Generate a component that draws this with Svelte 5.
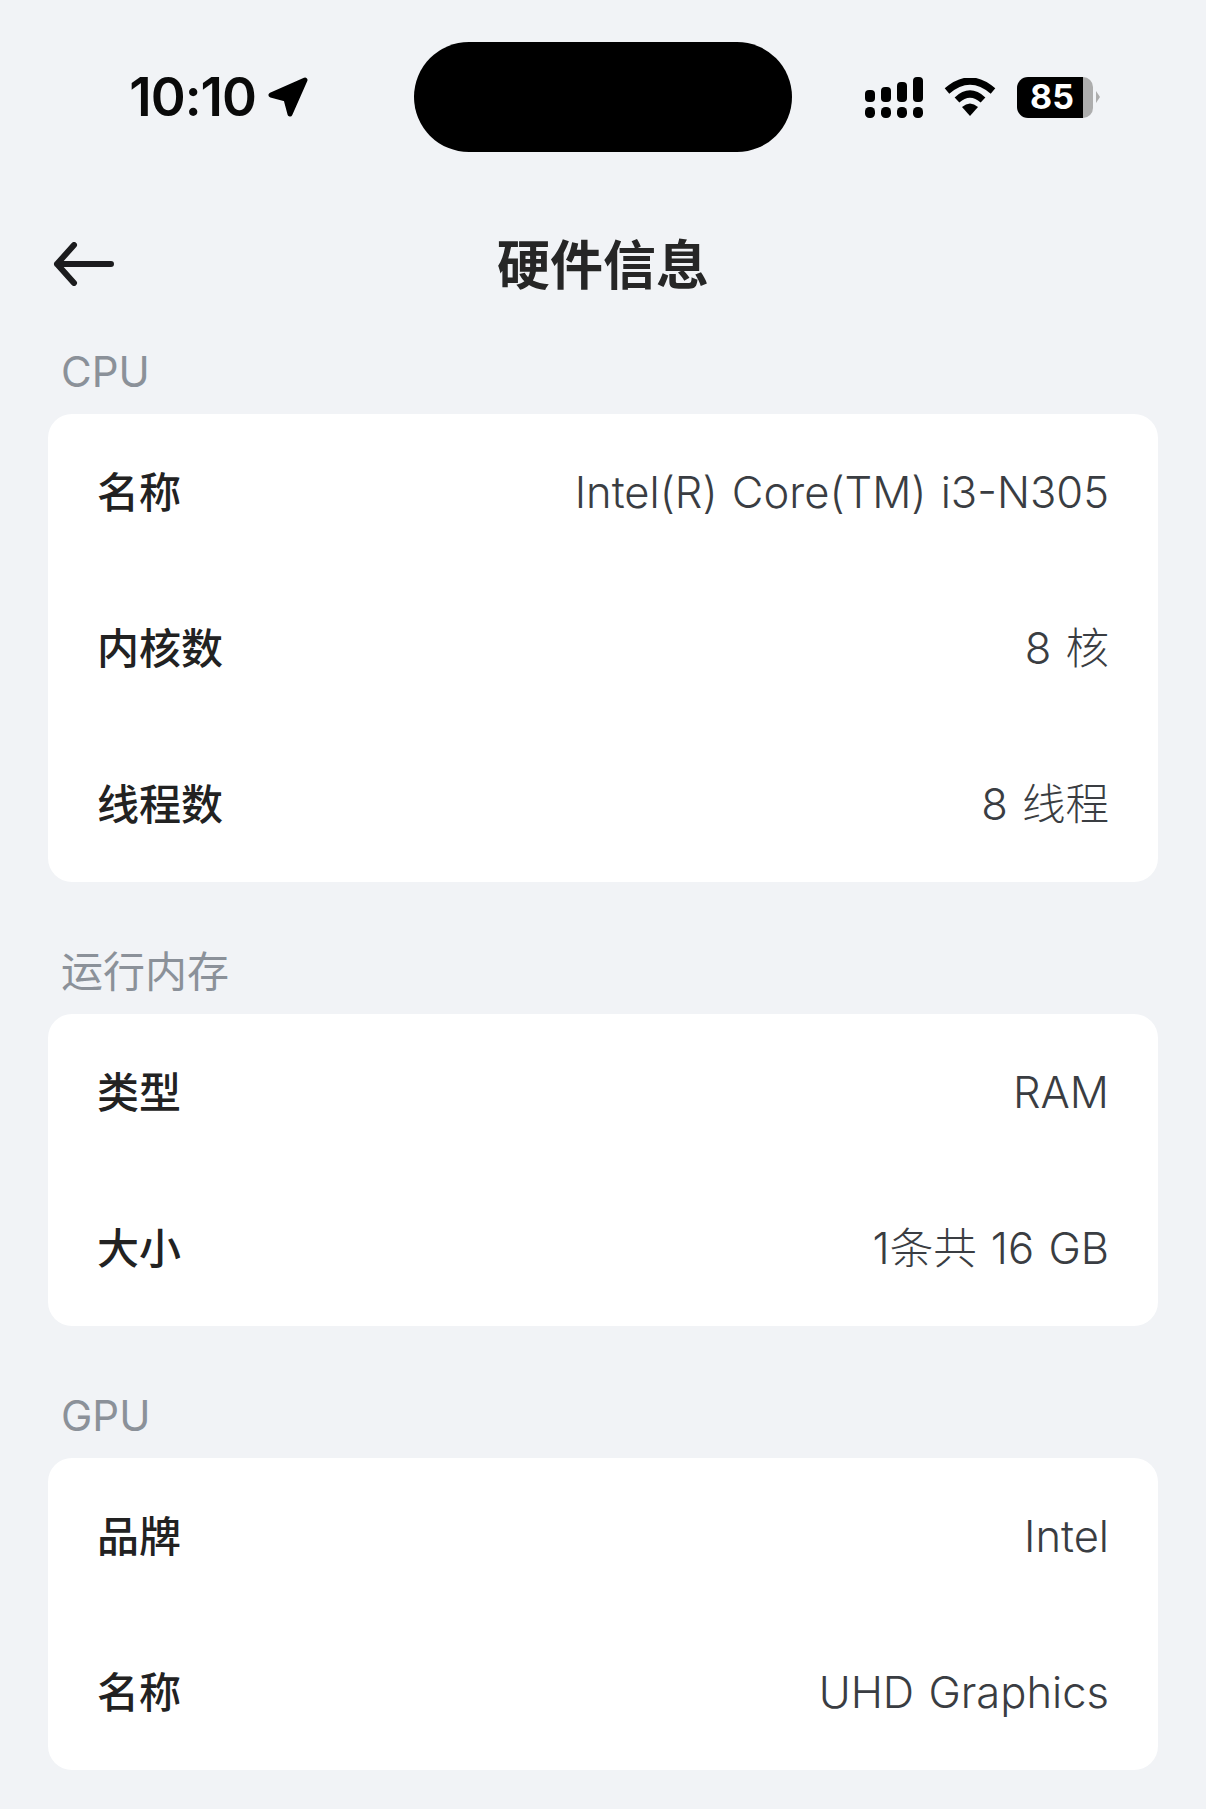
<script lang="ts">
	interface Row {
		label: string;
		value: string;
	}

	const sections: { title: string; rows: Row[] }[] = [
		{
			title: 'CPU',
			rows: [
				{ label: '名称', value: 'Intel(R) Core(TM) i3-N305' },
				{ label: '内核数', value: '8 核' },
				{ label: '线程数', value: '8 线程' }
			]
		},
		{
			title: '运行内存',
			rows: [
				{ label: '类型', value: 'RAM' },
				{ label: '大小', value: '1条共 16 GB' }
			]
		},
		{
			title: 'GPU',
			rows: [
				{ label: '品牌', value: 'Intel' },
				{ label: '名称', value: 'UHD Graphics' }
			]
		}
	];
</script>

<div class="page">
	<div class="status-bar">
		<div class="time">
			<span>10:10</span>
			<svg class="location" width="40" height="40" viewBox="0 0 40 40">
				<path d="M3 18 L37 3 L22 37 L18 22 Z" fill="#000" stroke="#000" stroke-width="5" stroke-linejoin="round" />
			</svg>
		</div>
		<div class="island"></div>
		<div class="indicators">
			<svg width="58" height="41" viewBox="0 0 58 41">
				<rect x="0" y="13" width="10" height="12" rx="4" />
				<rect x="16" y="10" width="10" height="15" rx="4" />
				<rect x="32" y="5" width="10" height="20" rx="4" />
				<rect x="48" y="0" width="10" height="25" rx="4" />
				<rect x="0" y="30" width="10" height="11" rx="4.5" />
				<rect x="16" y="30" width="10" height="11" rx="4.5" />
				<rect x="32" y="30" width="10" height="11" rx="4.5" />
				<rect x="48" y="30" width="10" height="11" rx="4.5" />
			</svg>
			<svg class="wifi" width="52" height="38" viewBox="0 0 52 38">
				<path d="M3 13 Q26 -7 49 13" fill="none" stroke="#000" stroke-width="7" />
				<path d="M13 22 Q26 10 39 22" fill="none" stroke="#000" stroke-width="7" />
				<path d="M18 29 Q26 22 34 29 L26 38 Z" fill="#000" />
			</svg>
			<div class="battery">
				<div class="battery-body"><span>85</span></div>
				<div class="battery-rest"></div>
				<div class="battery-cap"></div>
			</div>
		</div>
	</div>

	<header class="nav">
		<svg class="back" width="62" height="44" viewBox="0 0 62 44">
			<path d="M22 3 L5 22 L22 41 M5 22 H59" fill="none" stroke="#1c1c1e" stroke-width="6" stroke-linecap="round" stroke-linejoin="round" />
		</svg>
		<h1>硬件信息</h1>
	</header>

	{#each sections as section}
		<section>
			<h2>{section.title}</h2>
			<div class="card">
				{#each section.rows as row}
					<div class="row">
						<span class="label">{row.label}</span>
						<span class="value">{row.value}</span>
					</div>
				{/each}
			</div>
		</section>
	{/each}
</div>

<style>
	:global(body) {
		margin: 0;
		background: #f1f3f6;
	}

	.page {
		height: 1809px;
		overflow: hidden;
		background: #f1f3f6;
		font-family: Inter, 'Noto Sans CJK SC', sans-serif;
		color: #222;
		box-sizing: border-box;
	}

	.status-bar {
		height: 209px;
		padding-top: 42px;
		box-sizing: border-box;
		display: grid;
		grid-template-columns: 414px 378px 1fr;
	}

	.time {
		display: flex;
		align-items: center;
		justify-content: flex-end;
		gap: 12px;
		height: 110px;
		padding-right: 106px;
		font-size: 53px;
		font-weight: 600;
		color: #0a0a0a;
		letter-spacing: -1px;
	}

	.location {
		flex-shrink: 0;
	}

	.island {
		height: 110px;
		background: #000;
		border-radius: 55px;
	}

	.indicators {
		display: flex;
		align-items: center;
		gap: 21px;
		height: 110px;
		padding-left: 73px;
	}

	.battery {
		display: flex;
		align-items: center;
	}

	.battery-body {
		width: 66px;
		height: 41px;
		padding-left: 4px;
		box-sizing: border-box;
		background: #000;
		border-radius: 11px 0 0 11px;
		display: flex;
		align-items: center;
		justify-content: center;
		color: #fff;
		font-size: 34px;
		font-weight: 700;
		line-height: 1;
	}

	.battery-rest {
		width: 10px;
		height: 41px;
		background: #adadad;
		border-radius: 0 10px 10px 0;
	}

	.battery-cap {
		width: 0;
		height: 0;
		margin-left: 3px;
		border-left: 4px solid #adadad;
		border-top: 6px solid transparent;
		border-bottom: 6px solid transparent;
	}

	.nav {
		position: relative;
		height: 110px;
		display: flex;
		align-items: center;
		justify-content: center;
	}

	.back {
		position: absolute;
		left: 52px;
		top: 33px;
	}

	h1 {
		margin: 0 0 4px;
		font-size: 53px;
		font-weight: 700;
		color: #262626;
	}

	section {
		padding: 0 48px;
		margin-bottom: 37px;
	}

	h2 {
		margin: 0;
		height: 95px;
		padding: 26px 0 0 13px;
		box-sizing: border-box;
		font-size: 42px;
		line-height: 54px;
		font-weight: 400;
		color: #8b9199;
	}

	.card {
		background: #fff;
		border-radius: 24px;
	}

	.row {
		height: 156px;
		padding: 0 49px;
		display: flex;
		align-items: center;
		justify-content: space-between;
	}

	.label {
		margin-bottom: 6px;
		font-size: 42px;
		font-weight: 500;
		color: #222;
	}

	.value {
		font-size: 43.5px;
		line-height: 54px;
		font-weight: 300;
		color: #3a3d42;
		word-spacing: 2px;
	}
</style>
